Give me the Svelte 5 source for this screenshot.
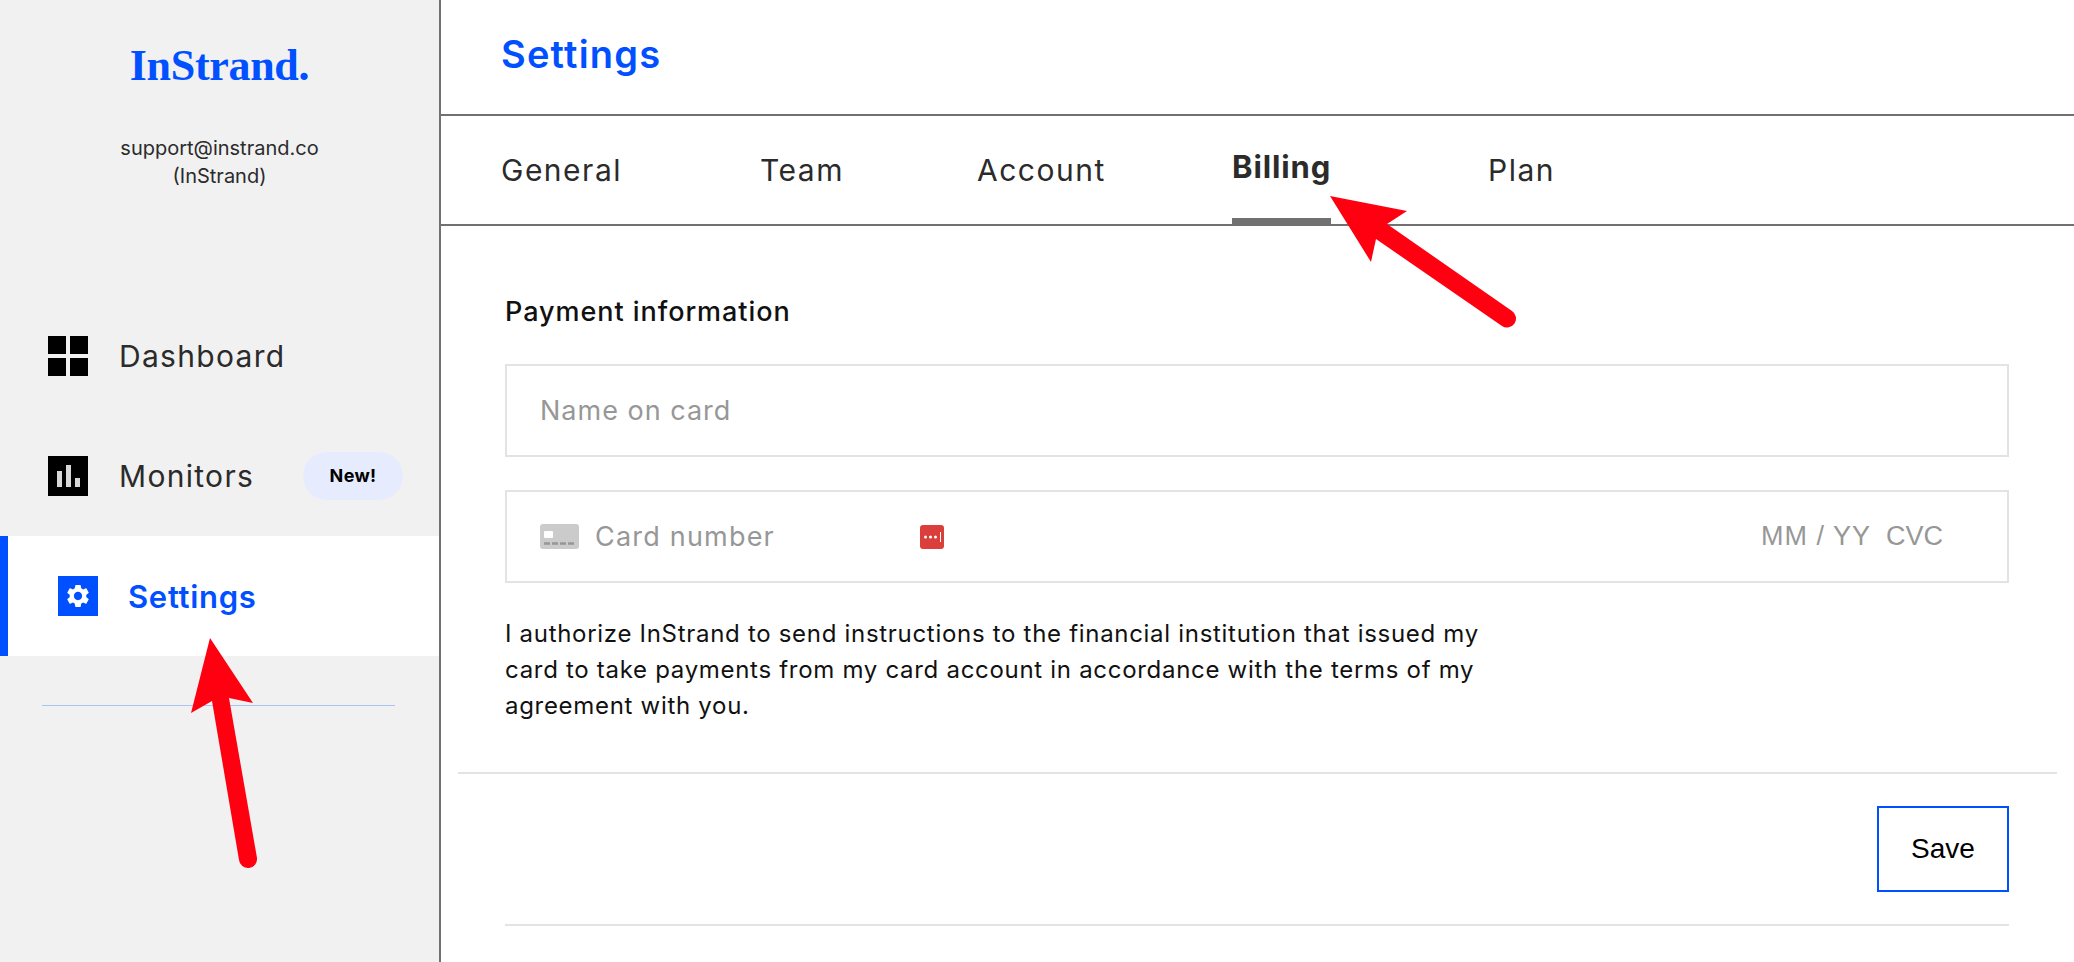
<script>
  const tabs = [
    { name: "General", width: 259 },
    { name: "Team", width: 217 },
    { name: "Account", width: 255 },
    { name: "Billing", width: 256 },
    { name: "Plan", width: 100 },
  ];
  let active = "Billing";
</script>

<div class="page">
  <aside class="sidebar">
    <div class="logo">InStrand.</div>
    <div class="user">
      <div>support@instrand.co</div>
      <div>(InStrand)</div>
    </div>
    <nav class="nav">
      <a class="item" href="#dashboard">
        <svg class="icon" viewBox="0 0 40 40">
          <rect width="18" height="18" />
          <rect x="22" width="18" height="18" />
          <rect y="22" width="18" height="18" />
          <rect x="22" y="22" width="18" height="18" />
        </svg>
        <span>Dashboard</span>
      </a>
      <a class="item" href="#monitors">
        <svg class="icon" viewBox="0 0 40 40">
          <rect width="40" height="40" />
          <rect x="9" y="15" width="5" height="16" fill="#d8d8d8" />
          <rect x="18" y="9" width="5" height="22" fill="#d8d8d8" />
          <rect x="27" y="22" width="5" height="9" fill="#d8d8d8" />
        </svg>
        <span>Monitors</span>
        <em class="badge">New!</em>
      </a>
      <a class="item current" href="#settings">
        <svg class="icon" viewBox="0 0 40 40">
          <rect width="40" height="40" fill="#0050ff" />
          <path
            transform="translate(20 20) scale(1.15) translate(-12 -12)"
            fill="#fff"
            d="M19.14 12.94c.04-.3.06-.61.06-.94 0-.32-.02-.64-.07-.94l2.03-1.58c.18-.14.23-.41.12-.61l-1.92-3.32c-.12-.22-.37-.29-.59-.22l-2.39.96c-.5-.38-1.03-.7-1.62-.94l-.36-2.54c-.04-.24-.24-.41-.48-.41h-3.84c-.24 0-.43.17-.47.41l-.36 2.54c-.59.24-1.13.57-1.62.94l-2.39-.96c-.22-.08-.47 0-.59.22L2.74 8.87c-.12.21-.08.47.12.61l2.03 1.58c-.05.3-.09.63-.09.94s.02.64.07.94l-2.03 1.58c-.18.14-.23.41-.12.61l1.92 3.32c.12.22.37.29.59.22l2.39-.96c.5.38 1.03.7 1.62.94l.36 2.54c.05.24.24.41.48.41h3.84c.24 0 .44-.17.47-.41l.36-2.54c.59-.24 1.13-.56 1.62-.94l2.39.96c.22.08.47 0 .59-.22l1.92-3.32c.12-.22.07-.47-.12-.61l-2.01-1.58zM12 15.6c-1.98 0-3.6-1.62-3.6-3.6s1.62-3.6 3.6-3.6 3.6 1.62 3.6 3.6-1.62 3.6-3.6 3.6z"
          />
        </svg>
        <span>Settings</span>
      </a>
    </nav>
    <div class="rule"></div>
  </aside>

  <main class="content">
    <header class="top"><h1>Settings</h1></header>
    <div class="tabs">
      {#each tabs as tab}
        <div class="tab" style="width: {tab.width}px">
          <span class:on={tab.name === active}>{tab.name}</span>
        </div>
      {/each}
    </div>

    <section class="form">
      <h2>Payment information</h2>
      <div class="field">Name on card</div>
      <div class="field card">
        <svg class="card-icon" width="39" height="25" viewBox="0 0 39 25">
          <rect width="39" height="25" rx="3" fill="#cbcbcb" />
          <rect x="4" y="7" width="9" height="7" rx="1" fill="#fff" />
          <path d="M4 19.500h6M12 19.500h6M20 19.500h6M28 19.500h6" stroke="#979797" stroke-width="2.500" />
        </svg>
        <span class="number">Card number</span>
        <svg class="pass" width="24" height="24" viewBox="0 0 24 24">
          <rect width="24" height="24" rx="3" fill="#da3f3b" />
          <circle cx="5.500" cy="12" r="1.500" fill="#fff" />
          <circle cx="10.500" cy="12" r="1.500" fill="#fff" />
          <circle cx="15.500" cy="12" r="1.500" fill="#fff" />
          <rect x="20" y="7" width="1" height="10" fill="#fff" />
        </svg>
        <span class="exp">MM / YY</span>
        <span class="cvc">CVC</span>
      </div>
      <p>I authorize InStrand to send instructions to the financial institution that issued my card to take payments from my card account in accordance with the terms of my agreement with you.</p>
    </section>

    <div class="actions">
      <button>Save</button>
    </div>
    <div class="bottom"></div>
  </main>

  <svg class="arrows" width="2074" height="962" viewBox="0 0 2074 962">
    <g fill="#ff0011">
      <path d="M210 638L253 703L229 698L257 858A9 9 0 0 1 239 860L212 701L191 713Z" />
      <path d="M1330 196L1407 211L1387 224L1512 311A9 9 0 0 1 1502 326L1376 239L1371 262Z" />
    </g>
  </svg>
</div>

<style>
  :global(body) {
    margin: 0;
    background: #fff;
  }
  .page {
    display: flex;
    position: relative;
    width: 2074px;
    height: 962px;
    overflow: hidden;
    font-family: "Inter", "Liberation Sans", sans-serif;
  }
  .sidebar {
    width: 439px;
    flex: none;
    background: #f1f1f2;
    border-right: 2px solid #717171;
  }
  .logo {
    margin-top: 41px;
    text-align: center;
    font-family: "Liberation Serif", serif;
    font-weight: 700;
    font-size: 44px;
    letter-spacing: -0.3px;
    line-height: 50px;
    color: #0050ff;
  }
  .user {
    margin-top: 43px;
    text-align: center;
    font-size: 20px;
    line-height: 28px;
    color: #2b2b2b;
  }
  .nav {
    margin-top: 106px;
  }
  .item {
    display: flex;
    align-items: center;
    height: 120px;
    padding-left: 48px;
    text-decoration: none;
    font-size: 30px;
    letter-spacing: 1.300px;
    color: #2b2b2b;
  }
  .icon {
    width: 40px;
    height: 40px;
    flex: none;
    margin-right: 31px;
  }
  .badge {
    width: 100px;
    height: 48px;
    margin-left: auto;
    margin-right: 36px;
    border-radius: 24px;
    background: #e6ecfd;
    color: #000;
    font-style: normal;
    font-weight: 700;
    font-size: 18px;
    letter-spacing: 0.300px;
    line-height: 48px;
    text-align: center;
  }
  .current {
    background: #fff;
    border-left: 8px solid #0050ff;
    padding-left: 50px;
    color: #0050ff;
    font-size: 31px;
    font-weight: 600;
    letter-spacing: 0.700px;
  }
  .current .icon {
    margin-right: 30px;
  }
  .rule {
    height: 1px;
    margin: 49px 44px 0 42px;
    background: #a9c3f7;
  }
  .content {
    flex: 1;
    min-width: 0;
  }
  .top {
    height: 114px;
    border-bottom: 2px solid #717171;
    padding-left: 60px;
  }
  h1 {
    margin: 0;
    font-size: 38px;
    font-weight: 600;
    letter-spacing: 1.200px;
    line-height: 108px;
    color: #0050ff;
  }
  .tabs {
    display: flex;
    height: 108px;
    padding-left: 60px;
    border-bottom: 2px solid #717171;
  }
  .tab {
    display: flex;
    flex: none;
    line-height: 108px;
    font-size: 30px;
    letter-spacing: 1.500px;
    color: #2b2b2b;
  }
  .tab span {
    display: block;
    box-sizing: border-box;
    height: 108px;
  }
  .tab .on {
    line-height: 102px;
    font-size: 31px;
    font-weight: 700;
    letter-spacing: 0.900px;
    border-bottom: 6px solid #717171;
  }
  .form {
    padding: 0 65px 0 64px;
  }
  h2 {
    margin: 0;
    padding-top: 61px;
    font-size: 27px;
    font-weight: 500;
    letter-spacing: 0.950px;
    line-height: 50px;
    color: #111;
  }
  .field {
    display: flex;
    align-items: center;
    height: 93px;
    box-sizing: border-box;
    margin-top: 27px;
    padding-left: 33px;
    border: 2px solid #e3e3e3;
    font-size: 27px;
    letter-spacing: 1px;
    color: #979797;
  }
  .card {
    margin-top: 33px;
  }
  .card-icon {
    flex: none;
    margin-right: 16px;
  }
  .number {
    width: 325px;
    letter-spacing: 1.200px;
  }
  .pass {
    flex: none;
  }
  .exp {
    margin-left: auto;
    font-family: "Liberation Sans", sans-serif;
  }
  .cvc {
    margin-left: 15px;
    margin-right: 64px;
    letter-spacing: 0;
    font-family: "Liberation Sans", sans-serif;
  }
  p {
    width: 985px;
    margin: 33px 0 0;
    font-size: 24px;
    letter-spacing: 0.700px;
    line-height: 36px;
    color: #111;
  }
  .actions {
    display: flex;
    justify-content: flex-end;
    margin: 48px 17px 0 17px;
    padding: 32px 48px 0 0;
    border-top: 2px solid #e3e3e3;
  }
  button {
    width: 132px;
    height: 86px;
    padding: 0;
    border: 2px solid #0050ff;
    background: #fff;
    font-family: "Liberation Sans", sans-serif;
    font-size: 28px;
    color: #000;
  }
  .bottom {
    height: 2px;
    margin: 32px 65px 0 64px;
    background: #e3e3e3;
  }
  .arrows {
    position: absolute;
    left: 0;
    top: 0;
    pointer-events: none;
  }
</style>
